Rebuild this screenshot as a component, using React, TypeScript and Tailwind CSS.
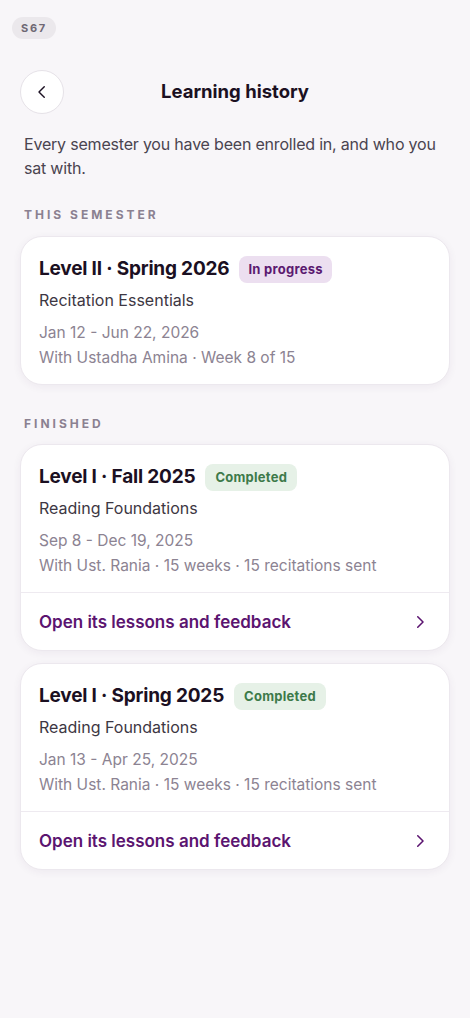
import React from "react";

function Chevron({ dir = "right", className = "", w = 2.1 }: { dir?: "left" | "right"; className?: string; w?: number }) {
  return (
    <svg width="18" height="18" viewBox="0 0 24 24" fill="none" stroke="currentColor" strokeWidth={w} strokeLinecap="round" strokeLinejoin="round" className={className}>
      {dir === "left" ? <path d="M15 5l-7 7 7 7" /> : <path d="M9 5l7 7-7 7" />}
    </svg>
  );
}

type Sem = {
  title: string;
  status: "progress" | "done";
  course: string;
  dates: string;
  meta: string;
  link?: boolean;
};

function Card({ s }: { s: Sem }) {
  return (
    <div className="bg-white rounded-[22px] border border-[#ece8ee] shadow-[0_2px_8px_rgba(60,30,80,0.06)] overflow-hidden">
      <div className="px-[18px] pt-[19px] pb-[15px]">
        <div className="flex items-center gap-[10px] h-[27px]">
          <span className="text-[19px] font-bold text-[#1b1022] tracking-[-0.01em]">{s.title}</span>
          {s.status === "progress" ? (
            <span className="h-[27px] px-[9px] rounded-[8px] bg-[#ecdff0] text-[#5b1a70] text-[13px] font-bold tracking-[0.02em] flex items-center">In progress</span>
          ) : (
            <span className="h-[27px] px-[10px] rounded-[8px] bg-[#e6f1e7] text-[#3d7a4a] text-[13px] font-bold tracking-[0.02em] flex items-center">Completed</span>
          )}
        </div>
        <div className="mt-[5px] text-[16px] leading-[24px] text-[#3d3743]">{s.course}</div>
        <div className="mt-[10px] text-[15.5px] leading-[22px] text-[#8c8392]">{s.dates}</div>
        <div className="mt-[3px] text-[15.5px] leading-[22px] text-[#8c8392]">{s.meta}</div>
      </div>
      {s.link && (
        <div className="border-t border-[#eeeaf0] px-[18px] pt-[18px] pb-[17px] flex items-center justify-between">
          <span className="text-[17px] leading-[22px] font-semibold text-[#5b1470]">Open its lessons and feedback</span>
          <Chevron className="text-[#5b1470] mr-[2px]" />
        </div>
      )}
    </div>
  );
}

export default function App() {
  return (
    <div className="min-h-[1018px] w-full bg-[#f8f6f9] font-['Inter','Noto_Sans',sans-serif]">
      <div className="pt-[17px] px-[12px] flex">
        <span className="flex items-center h-[22px] px-[9px] rounded-full bg-[#ebe8ec] text-[11px] leading-[22px] font-bold tracking-[0.16em] text-[#6f6874]">S67</span>
      </div>
      <div className="relative mt-[31px] h-[44px] flex items-center justify-center">
        <button className="absolute left-[20px] top-0 w-[44px] h-[44px] rounded-full bg-white border border-[#e6e2e8] flex items-center justify-center text-[#1b1022]">
          <Chevron dir="left" w={1.9} />
        </button>
        <h1 className="text-[18.5px] font-bold text-[#1b1022]">Learning history</h1>
      </div>
      <p className="mt-[18px] px-[24px] text-[16px] leading-[24px] tracking-[-0.2px] text-[#4a4450]">
        Every semester you have been enrolled in, and who you sat with.
      </p>
      <div className="mt-[27px] px-[24px] text-[12px] leading-[16px] font-bold tracking-[0.25em] text-[#8b8191]">THIS SEMESTER</div>
      <div className="mt-[13px] px-[20px]">
        <Card s={{ title: "Level II · Spring 2026", status: "progress", course: "Recitation Essentials", dates: "Jan 12 - Jun 22, 2026", meta: "With Ustadha Amina · Week 8 of 15" }} />
      </div>
      <div className="mt-[31px] px-[24px] text-[12px] leading-[16px] font-bold tracking-[0.25em] text-[#8b8191]">FINISHED</div>
      <div className="mt-[12px] px-[20px] flex flex-col gap-[12px]">
        <Card s={{ title: "Level I · Fall 2025", status: "done", course: "Reading Foundations", dates: "Sep 8 - Dec 19, 2025", meta: "With Ust. Rania · 15 weeks · 15 recitations sent", link: true }} />
        <Card s={{ title: "Level I · Spring 2025", status: "done", course: "Reading Foundations", dates: "Jan 13 - Apr 25, 2025", meta: "With Ust. Rania · 15 weeks · 15 recitations sent", link: true }} />
      </div>
    </div>
  );
}
